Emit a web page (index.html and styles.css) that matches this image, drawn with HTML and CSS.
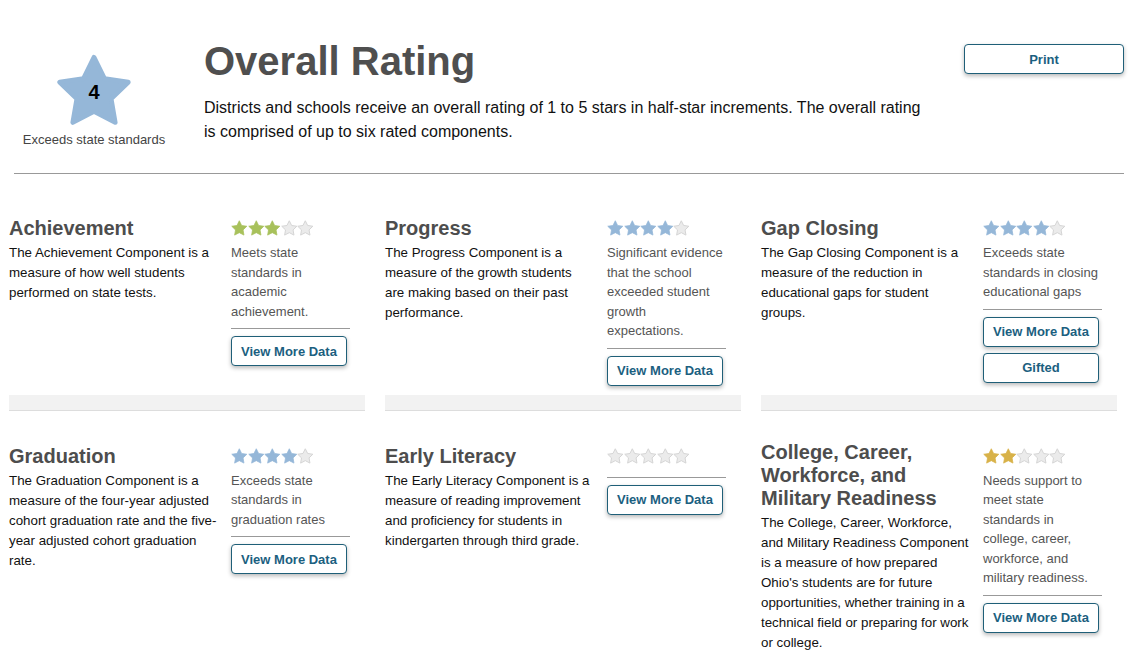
FILE: index.html
```html
<!DOCTYPE html>
<html lang="en">
<head>
<meta charset="utf-8">
<title>Overall Rating</title>
<link rel="stylesheet" href="styles.css">
</head>
<body>
<svg width="0" height="0" class="defs" aria-hidden="true">
  <defs>
    <polygon id="star" points="12,2 15.09,8.26 22,9.27 17,14.14 18.18,21.02 12,17.77 5.82,21.02 7,14.14 2,9.27 8.91,8.26"/>
  </defs>
</svg>

<header class="top">
  <div class="overall-star">
    <div class="big-star">
      <svg width="74" height="72" viewBox="1.2 1.2 21.6 20.7"><use href="#star" class="big-fill"/></svg>
      <span class="big-num">4</span>
    </div>
    <div class="big-label">Exceeds state standards</div>
  </div>
  <div class="intro">
    <h1>Overall Rating</h1>
    <p>Districts and schools receive an overall rating of 1 to 5 stars in half-star increments. The overall rating is comprised of up to six rated components.</p>
  </div>
  <button class="btn print">Print</button>
</header>
<div class="rule"></div>

<main class="grid">
  <section class="card">
    <div class="body">
      <div class="text">
        <h2>Achievement</h2>
        <p>The Achievement Component is a measure of how well students performed on state tests.</p>
      </div>
      <div class="side">
        <div class="stars green">
          <svg viewBox="1 1 22 22"><use href="#star" class="on"/></svg><svg viewBox="1 1 22 22"><use href="#star" class="on"/></svg><svg viewBox="1 1 22 22"><use href="#star" class="on"/></svg><svg viewBox="1 1 22 22"><use href="#star" class="off"/></svg><svg viewBox="1 1 22 22"><use href="#star" class="off"/></svg>
        </div>
        <p class="status">Meets state standards in academic achievement.</p>
        <div class="side-rule"></div>
        <button class="btn">View More Data</button>
      </div>
    </div>
    <div class="foot"></div>
  </section>

  <section class="card">
    <div class="body">
      <div class="text">
        <h2>Progress</h2>
        <p>The Progress Component is a measure of the growth students are making based on their past performance.</p>
      </div>
      <div class="side">
        <div class="stars blue">
          <svg viewBox="1 1 22 22"><use href="#star" class="on"/></svg><svg viewBox="1 1 22 22"><use href="#star" class="on"/></svg><svg viewBox="1 1 22 22"><use href="#star" class="on"/></svg><svg viewBox="1 1 22 22"><use href="#star" class="on"/></svg><svg viewBox="1 1 22 22"><use href="#star" class="off"/></svg>
        </div>
        <p class="status">Significant evidence that the school exceeded student growth expectations.</p>
        <div class="side-rule"></div>
        <button class="btn">View More Data</button>
      </div>
    </div>
    <div class="foot"></div>
  </section>

  <section class="card">
    <div class="body">
      <div class="text">
        <h2>Gap Closing</h2>
        <p>The Gap Closing Component is a measure of the reduction in educational gaps for student groups.</p>
      </div>
      <div class="side">
        <div class="stars blue">
          <svg viewBox="1 1 22 22"><use href="#star" class="on"/></svg><svg viewBox="1 1 22 22"><use href="#star" class="on"/></svg><svg viewBox="1 1 22 22"><use href="#star" class="on"/></svg><svg viewBox="1 1 22 22"><use href="#star" class="on"/></svg><svg viewBox="1 1 22 22"><use href="#star" class="off"/></svg>
        </div>
        <p class="status">Exceeds state standards in closing educational gaps</p>
        <div class="side-rule"></div>
        <button class="btn">View More Data</button>
        <button class="btn">Gifted</button>
      </div>
    </div>
    <div class="foot"></div>
  </section>

  <section class="card">
    <div class="body">
      <div class="text">
        <h2>Graduation</h2>
        <p>The Graduation Component is a measure of the four-year adjusted cohort graduation rate and the five-year adjusted cohort graduation rate.</p>
      </div>
      <div class="side">
        <div class="stars blue">
          <svg viewBox="1 1 22 22"><use href="#star" class="on"/></svg><svg viewBox="1 1 22 22"><use href="#star" class="on"/></svg><svg viewBox="1 1 22 22"><use href="#star" class="on"/></svg><svg viewBox="1 1 22 22"><use href="#star" class="on"/></svg><svg viewBox="1 1 22 22"><use href="#star" class="off"/></svg>
        </div>
        <p class="status">Exceeds state standards in graduation rates</p>
        <div class="side-rule"></div>
        <button class="btn">View More Data</button>
      </div>
    </div>
  </section>

  <section class="card">
    <div class="body">
      <div class="text">
        <h2>Early Literacy</h2>
        <p>The Early Literacy Component is a measure of reading improvement and proficiency for students in kindergarten through third grade.</p>
      </div>
      <div class="side">
        <div class="stars">
          <svg viewBox="1 1 22 22"><use href="#star" class="off"/></svg><svg viewBox="1 1 22 22"><use href="#star" class="off"/></svg><svg viewBox="1 1 22 22"><use href="#star" class="off"/></svg><svg viewBox="1 1 22 22"><use href="#star" class="off"/></svg><svg viewBox="1 1 22 22"><use href="#star" class="off"/></svg>
        </div>
        <div class="side-rule empty"></div>
        <button class="btn">View More Data</button>
      </div>
    </div>
  </section>

  <section class="card">
    <div class="body">
      <div class="text">
        <h2 class="multi">College, Career, Workforce, and Military Readiness</h2>
        <p>The College, Career, Workforce, and Military Readiness Component is a measure of how prepared Ohio's students are for future opportunities, whether training in a technical field or preparing for work or college.</p>
      </div>
      <div class="side">
        <div class="stars gold">
          <svg viewBox="1 1 22 22"><use href="#star" class="on"/></svg><svg viewBox="1 1 22 22"><use href="#star" class="on"/></svg><svg viewBox="1 1 22 22"><use href="#star" class="off"/></svg><svg viewBox="1 1 22 22"><use href="#star" class="off"/></svg><svg viewBox="1 1 22 22"><use href="#star" class="off"/></svg>
        </div>
        <p class="status">Needs support to meet state standards in college, career, workforce, and military readiness.</p>
        <div class="side-rule"></div>
        <button class="btn">View More Data</button>
      </div>
    </div>
  </section>
</main>
</body>
</html>
```

FILE: styles.css
```css
* { box-sizing: border-box; }

html, body {
  margin: 0;
  padding: 0;
  background: #fff;
}

body {
  font-family: "Liberation Sans", Arial, sans-serif;
  color: #111;
  width: 1142px;
  overflow: hidden;
}

.defs {
  position: absolute;
  width: 0;
  height: 0;
}

.top {
  display: flex;
  align-items: flex-start;
  padding: 38px 18px 0 14px;
}

.overall-star {
  width: 160px;
  flex: none;
  margin-top: 16px;
  display: flex;
  flex-direction: column;
  align-items: center;
}

.big-star {
  position: relative;
  width: 74px;
  height: 72px;
}

.big-star svg { display: block; }

.big-fill {
  fill: #95b7d8;
  stroke: #95b7d8;
  stroke-width: 1.4;
  stroke-linejoin: round;
}

.big-num {
  position: absolute;
  left: 0;
  right: 0;
  top: 26px;
  text-align: center;
  font-weight: bold;
  font-size: 20px;
  line-height: 24px;
  color: #000;
}

.big-label {
  margin-top: 6px;
  font-size: 13px;
  line-height: 16px;
  color: #444;
  white-space: nowrap;
}

.intro {
  margin-left: 30px;
  width: 725px;
  flex: none;
}

.intro h1 {
  margin: 0;
  font-size: 40px;
  line-height: 46px;
  font-weight: bold;
  color: #4f4f4f;
}

.intro p {
  margin: 12px 0 0;
  font-size: 16px;
  line-height: 24px;
  color: #111;
}

.btn {
  display: block;
  width: 116px;
  height: 30px;
  padding: 0;
  background: #fff;
  border: 1px solid #1f5f78;
  border-radius: 4px;
  box-shadow: 0 2px 4px rgba(0, 0, 0, 0.28);
  font-family: "Liberation Sans", Arial, sans-serif;
  font-weight: bold;
  font-size: 13px;
  color: #1b6080;
  cursor: pointer;
}

.btn + .btn { margin-top: 6px; }

.btn.print {
  width: 160px;
  margin: 6px 0 0 auto;
}

.rule {
  margin: 25px 18px 0 14px;
  border-top: 1px solid #999;
}

.grid {
  display: grid;
  grid-template-columns: repeat(3, 356px);
  column-gap: 20px;
  row-gap: 34px;
  margin: 43px 0 0 9px;
}

.card {
  display: flex;
  flex-direction: column;
}

.body {
  flex: 1;
  display: grid;
  grid-template-columns: 209px 119px;
  column-gap: 13px;
  align-items: start;
}

.text h2 {
  margin: 0 0 3px;
  font-size: 20px;
  line-height: 23px;
  font-weight: bold;
  color: #4d4d4d;
}

.text h2.multi {
  margin-top: -4px;
}

.text p {
  margin: 0;
  font-size: 13.33px;
  line-height: 20px;
  color: #111;
}

.stars {
  display: flex;
  align-items: center;
  height: 23px;
  margin-bottom: 3px;
}

.stars svg {
  width: 16.6px;
  height: 16.6px;
  flex: none;
}

.stars .off {
  fill: #ebebeb;
  stroke: #d4d4d4;
  stroke-width: 1.3;
  stroke-linejoin: round;
}

.stars .on {
  stroke-width: 1;
  stroke-linejoin: round;
}

.green .on { fill: #a8c15b; stroke: #a8c15b; }
.blue .on { fill: #95b7d8; stroke: #95b7d8; }
.gold .on { fill: #d8b249; stroke: #d8b249; }

.status {
  margin: 0;
  font-size: 13px;
  line-height: 19.5px;
  color: #555;
}

.side-rule {
  border-top: 1px solid #999;
  margin: 7px 0 7px;
}

.side-rule.empty { margin-top: 9px; }

.foot {
  height: 16px;
  margin-top: 9px;
  background: #f2f2f2;
  border-bottom: 1px solid #ddd;
}
```
